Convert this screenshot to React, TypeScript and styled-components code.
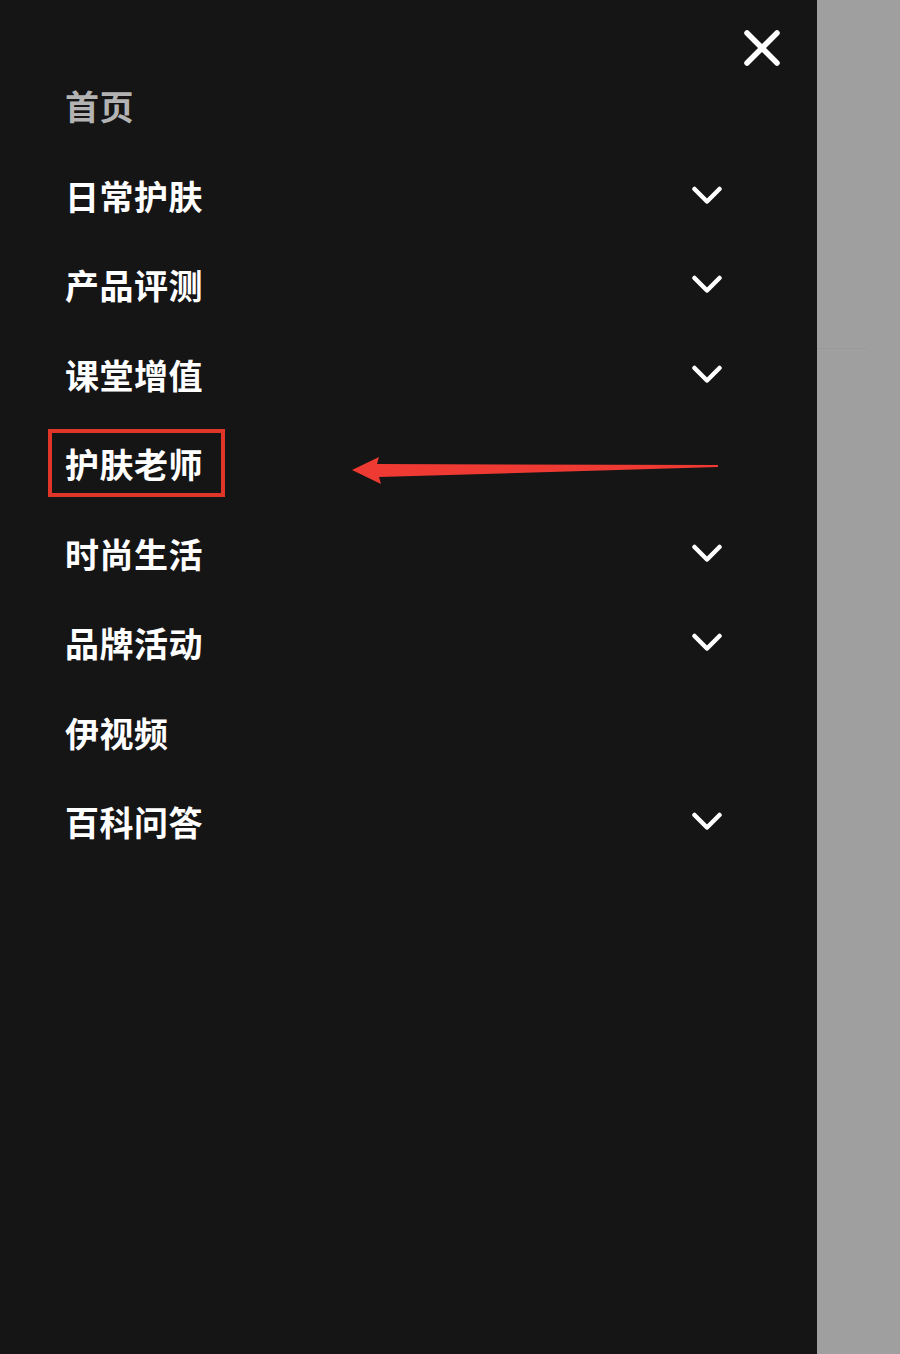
import React from "react";
import styled, { createGlobalStyle } from "styled-components";

const Global = createGlobalStyle`
  html, body { margin: 0; padding: 0; }
  body {
    background: #a09f9f;
    font-family: "Noto Sans CJK SC", "Noto Sans", sans-serif;
  }
`;

const Page = styled.div`
  display: flex;
  width: 900px;
  height: 1354px;
  overflow: hidden;
`;

const Drawer = styled.aside`
  width: 817px;
  height: 100%;
  background: #161515;
  display: flex;
  flex-direction: column;
`;

const Backdrop = styled.div`
  flex: 1;
  background: #a09f9f;
  display: flex;
  flex-direction: column;
`;

const BackdropRule = styled.div`
  margin-top: 348px;
  width: 50px;
  height: 1px;
  background: #9a9a9c;
`;

const Header = styled.div`
  height: 61.5px;
  display: flex;
  justify-content: flex-end;
  align-items: flex-start;
  padding-right: 37px;
`;

const CloseButton = styled.button`
  margin-top: 30px;
  width: 36px;
  height: 36px;
  padding: 0;
  border: none;
  background: none;
  display: flex;
  align-items: center;
  justify-content: center;
  cursor: pointer;
`;

const NavList = styled.nav`
  display: flex;
  flex-direction: column;
`;

const Row = styled.div`
  position: relative;
  height: 89.5px;
  display: flex;
  align-items: center;
  justify-content: space-between;
  padding-left: 65px;
  padding-right: 94px;
`;

const Label = styled.span<{ $muted?: boolean; $highlight?: boolean }>`
  position: relative;
  font-size: 34px;
  line-height: 34px;
  font-weight: 700;
  letter-spacing: 0.5px;
  color: ${(p) => (p.$muted ? "#b3b3b3" : "#ffffff")};
  ${(p) =>
    p.$highlight
      ? `&::after {
          content: "";
          position: absolute;
          top: -18px;
          bottom: -16px;
          left: -17px;
          right: -22px;
          border: 4px solid #e2352a;
        }`
      : ""}
`;

const Chevron = styled.svg`
  width: 32px;
  height: 20px;
  display: block;
`;

const Arrow = styled.svg`
  position: absolute;
  left: 350px;
  top: 34px;
  width: 372px;
  height: 32px;
  pointer-events: none;
`;

const items: { label: string; sub: boolean; highlight?: boolean }[] = [
  { label: "日常护肤", sub: true },
  { label: "产品评测", sub: true },
  { label: "课堂增值", sub: true },
  { label: "护肤老师", sub: false, highlight: true },
  { label: "时尚生活", sub: true },
  { label: "品牌活动", sub: true },
  { label: "伊视频", sub: false },
  { label: "百科问答", sub: true },
];

const ChevronDown = () => (
  <Chevron viewBox="0 0 32 20">
    <polyline
      points="3.5,3 16,15.5 28.5,3"
      fill="none"
      stroke="#ffffff"
      strokeWidth="4.5"
      strokeLinecap="round"
      strokeLinejoin="round"
    />
  </Chevron>
);

export default function App() {
  return (
    <>
      <Global />
      <Page>
        <Drawer>
          <Header>
            <CloseButton aria-label="关闭">
              <svg width="36" height="36" viewBox="0 0 36 36">
                <path
                  d="M3 3 L33 33 M33 3 L3 33"
                  stroke="#ffffff"
                  strokeWidth="5.5"
                  strokeLinecap="round"
                />
              </svg>
            </CloseButton>
          </Header>
          <NavList>
            <Row>
              <Label $muted>首页</Label>
            </Row>
            {items.map((it) => (
              <Row key={it.label}>
                <Label $highlight={it.highlight}>{it.label}</Label>
                {it.sub && <ChevronDown />}
                {it.highlight && (
                  <Arrow viewBox="350 454 372 32">
                    <polygon
                      points="352,470 379,457 377,464 718,465 718,467 379,477 381,484"
                      fill="#ef3a33"
                    />
                  </Arrow>
                )}
              </Row>
            ))}
          </NavList>
        </Drawer>
        <Backdrop>
          <BackdropRule />
        </Backdrop>
      </Page>
    </>
  );
}
